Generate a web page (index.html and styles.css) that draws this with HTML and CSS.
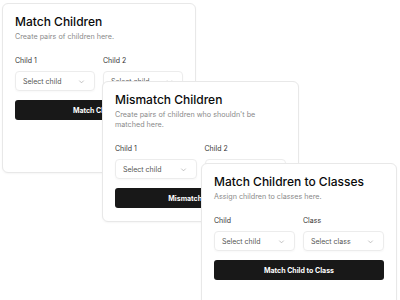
FILE: index.html
```html
<!DOCTYPE html>
<html lang="en">
<head>
    <meta charset="UTF-8">
    <meta name="viewport" content="width=device-width, initial-scale=1.0">
    <title>Matching</title>
    <link rel="stylesheet" href="styles.css">
</head>
<body>
    <div class="stack">
        <!-- Match Children -->
        <div class="card card-match">
            <h2 class="card-title">Match Children</h2>
            <p class="card-desc">Create pairs of children here.</p>
            <div class="fields">
                <div class="field">
                    <label>Child 1</label>
                    <div class="select"><span>Select child</span><svg viewBox="0 0 10 10"><path d="M2.5 4l2.5 2.5L7.5 4"/></svg></div>
                </div>
                <div class="field">
                    <label>Child 2</label>
                    <div class="select"><span>Select child</span><svg viewBox="0 0 10 10"><path d="M2.5 4l2.5 2.5L7.5 4"/></svg></div>
                </div>
            </div>
            <button class="btn">Match Children</button>
        </div>

        <!-- Mismatch Children -->
        <div class="card card-mismatch">
            <h2 class="card-title">Mismatch Children</h2>
            <p class="card-desc">Create pairs of children who shouldn't be matched here.</p>
            <div class="fields">
                <div class="field">
                    <label>Child 1</label>
                    <div class="select"><span>Select child</span><svg viewBox="0 0 10 10"><path d="M2.5 4l2.5 2.5L7.5 4"/></svg></div>
                </div>
                <div class="field">
                    <label>Child 2</label>
                    <div class="select"><span>Select child</span><svg viewBox="0 0 10 10"><path d="M2.5 4l2.5 2.5L7.5 4"/></svg></div>
                </div>
            </div>
            <button class="btn">Mismatch Children</button>
        </div>

        <!-- Match Children to Classes -->
        <div class="card card-classes">
            <h2 class="card-title">Match Children to Classes</h2>
            <p class="card-desc">Assign children to classes here.</p>
            <div class="fields">
                <div class="field">
                    <label>Child</label>
                    <div class="select"><span>Select child</span><svg viewBox="0 0 10 10"><path d="M2.5 4l2.5 2.5L7.5 4"/></svg></div>
                </div>
                <div class="field">
                    <label>Class</label>
                    <div class="select"><span>Select class</span><svg viewBox="0 0 10 10"><path d="M2.5 4l2.5 2.5L7.5 4"/></svg></div>
                </div>
            </div>
            <button class="btn">Match Child to Class</button>
        </div>
    </div>
</body>
</html>
```

FILE: styles.css
```css
* {
    margin: 0;
    padding: 0;
    box-sizing: border-box;
}
body {
    font-family: 'Inter', 'Liberation Sans', sans-serif;
    background-color: #fff;
    color: #0a0a0a;
    overflow: hidden;
}
.stack {
    display: grid;
    grid-template-columns: 100px 99px 196px;
    grid-template-rows: 78px 82px auto;
    padding: 3px 0 0 2px;
}
.card {
    width: 196px;
    align-self: start;
    background-color: #fff;
    border: 1px solid #e8e8e8;
    border-radius: 6px;
    box-shadow: 0 1px 2px rgba(0, 0, 0, 0.04);
    padding: 10px 12px 12px;
}
.card-match {
    grid-column: 1 / 3;
    grid-row: 1 / 4;
    width: 194px;
    height: 170px;
}
.card-mismatch {
    grid-column: 2 / 4;
    grid-row: 2 / 4;
    width: 197px;
    height: 141px;
}
.card-classes {
    grid-column: 3;
    grid-row: 3;
    height: 150px;
}
.card-title {
    font-size: 12px;
    font-weight: 500;
    line-height: 16px;
    color: #0a0a0a;
}
.card-desc {
    margin-top: 2px;
    padding-right: 16px;
    font-size: 7.2px;
    line-height: 10px;
    color: #8a8a8a;
}
.fields {
    display: grid;
    grid-template-columns: 1fr 1fr;
    gap: 8px;
    margin-top: 14px;
}
.field label {
    display: block;
    font-size: 7px;
    line-height: 10px;
    color: #333;
    margin-bottom: 5px;
}
.select {
    display: flex;
    align-items: center;
    justify-content: space-between;
    height: 20px;
    padding: 0 8px 0 7px;
    border: 1px solid #ececec;
    border-radius: 4px;
    box-shadow: 0 1px 2px rgba(0, 0, 0, 0.03);
    font-size: 7px;
    color: #555;
}
.select svg {
    width: 9px;
    height: 9px;
    fill: none;
    stroke: #aaa;
    stroke-width: 0.8;
}
.btn {
    display: block;
    width: 100%;
    height: 20px;
    margin-top: 9px;
    border: none;
    border-radius: 3px;
    background-color: #181818;
    color: #fff;
    font-family: 'Inter', 'Liberation Sans', sans-serif;
    font-size: 7px;
    font-weight: 700;
    cursor: pointer;
}
```
